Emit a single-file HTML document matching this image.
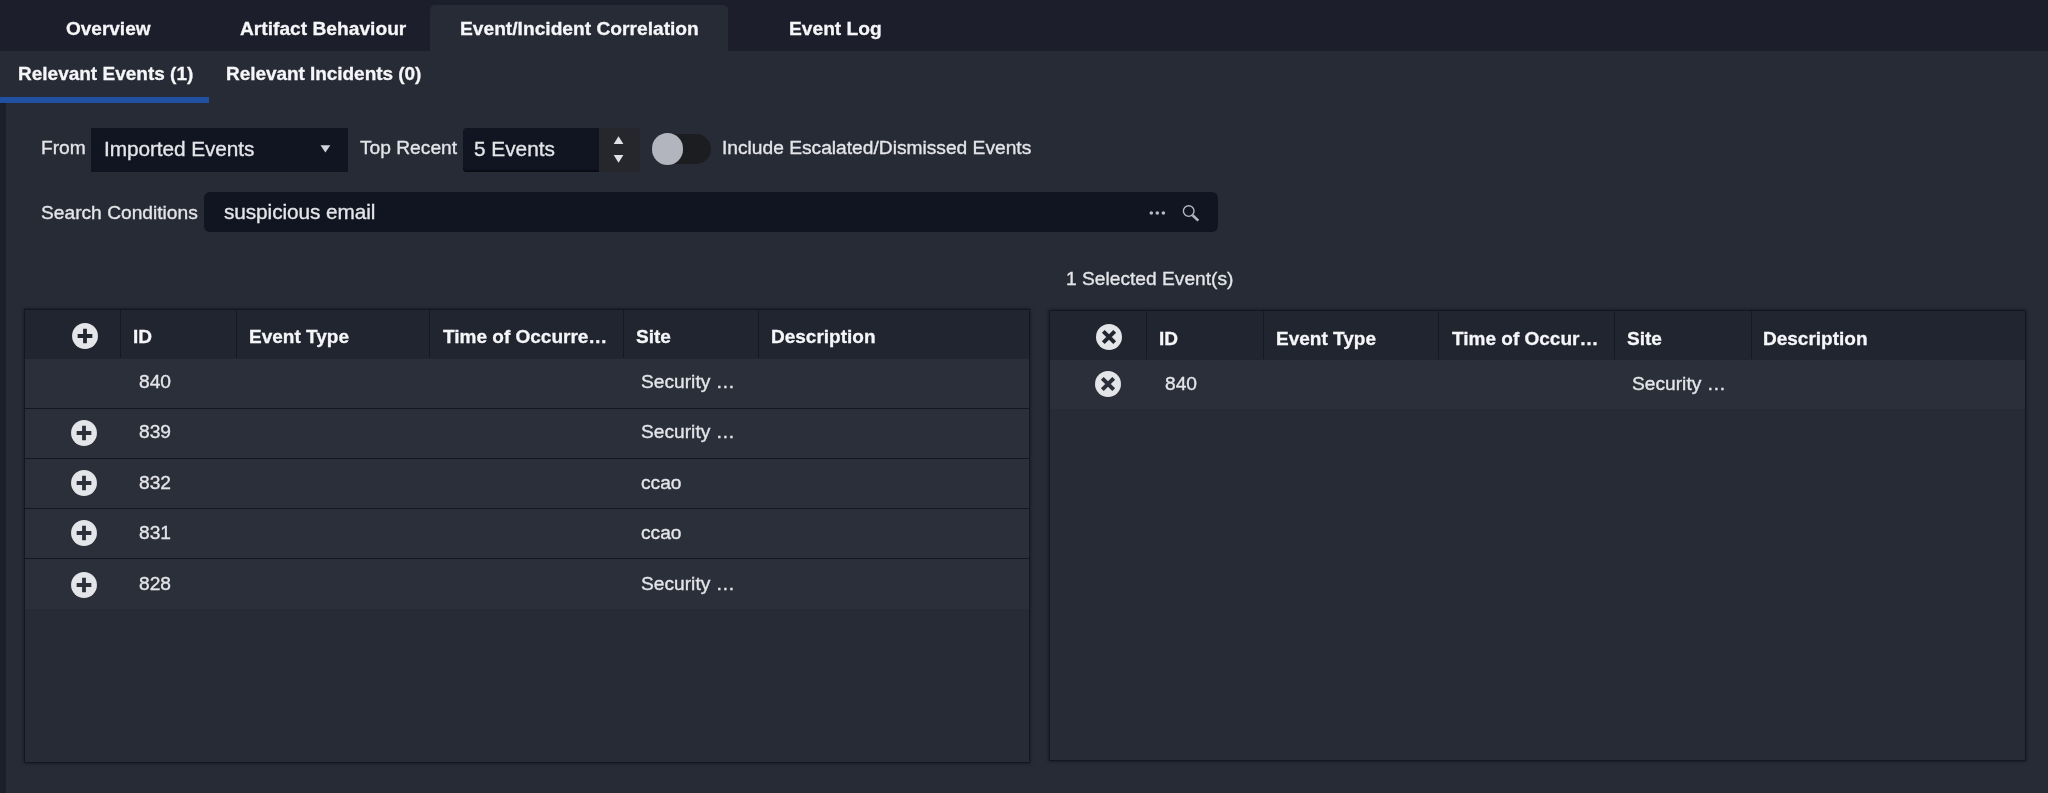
<!DOCTYPE html>
<html lang="en"><head><meta charset="utf-8"><title>Event/Incident Correlation</title>
<style>
html,body{margin:0;padding:0;}
body{width:2048px;height:793px;overflow:hidden;background:#272b35;font-family:"Liberation Sans", sans-serif;position:relative;}
body>div,body>svg,body>span{position:absolute;display:block;}
.t{white-space:nowrap;line-height:1;will-change:transform;}
</style></head><body>
<div style="left:0px;top:0px;width:2048px;height:51px;background:#1c1f2b;"></div>
<div style="left:430px;top:5px;width:298px;height:46px;background:#272b35;border-radius:5px 5px 0 0;"></div>
<div style="left:0px;top:103px;width:6px;height:690px;background:#1c1f2b;"></div>
<div style="left:0px;top:97px;width:209px;height:6px;background:#2050a0;"></div>
<span class="t" style="left:66.00px;top:18.67px;font-size:19px;font-weight:bold;-webkit-text-stroke:0.3px;color:#f6f6f8;">Overview</span>
<span class="t" style="left:240.20px;top:18.50px;font-size:19.2px;font-weight:bold;-webkit-text-stroke:0.3px;color:#f6f6f8;">Artifact Behaviour</span>
<span class="t" style="left:459.60px;top:18.50px;font-size:19.2px;font-weight:bold;-webkit-text-stroke:0.3px;color:#f6f6f8;">Event/Incident Correlation</span>
<span class="t" style="left:788.60px;top:18.50px;font-size:19.2px;font-weight:bold;-webkit-text-stroke:0.3px;color:#f6f6f8;">Event Log</span>
<span class="t" style="left:17.50px;top:64.42px;font-size:19px;font-weight:bold;-webkit-text-stroke:0.3px;color:#f6f6f8;">Relevant Events (1)</span>
<span class="t" style="left:225.50px;top:64.42px;font-size:19px;font-weight:bold;-webkit-text-stroke:0.3px;color:#f6f6f8;letter-spacing:-0.05px;">Relevant Incidents (0)</span>
<span class="t" style="left:41.10px;top:137.95px;font-size:19.2px;-webkit-text-stroke:0.35px;color:#e4e5e9;">From</span>
<div style="left:91px;top:127.5px;width:257px;height:44.5px;background:#111521;"></div>
<span class="t" style="left:104.30px;top:139.09px;font-size:20.8px;-webkit-text-stroke:0.35px;color:#e4e5e9;letter-spacing:-0.08px;">Imported Events</span>
<svg style="left:320px;top:144.5px" width="11" height="9" viewBox="0 0 11 9"><path d="M0.5 0.3 L10.3 0.3 L5.4 7.6 Z" fill="#d3d5db"/></svg>
<span class="t" style="left:359.60px;top:137.95px;font-size:19.2px;-webkit-text-stroke:0.35px;color:#e4e5e9;">Top Recent</span>
<div style="left:463px;top:127.5px;width:177px;height:44.5px;background:#25272d;border-radius:4px;"></div>
<div style="left:463px;top:127.5px;width:136px;height:44.5px;background:#111521;border-radius:4px 0 0 4px;box-shadow:inset 0 -2px 0 #0b0d14;"></div>
<span class="t" style="left:473.75px;top:139.09px;font-size:20.8px;-webkit-text-stroke:0.35px;color:#e4e5e9;">5 Events</span>
<svg style="left:613px;top:136px" width="11" height="28" viewBox="0 0 11 28"><path d="M0.7 7.9 L10.4 7.9 L5.55 0.2 Z" fill="#e0e1e6"/><path d="M0.7 19.1 L10.4 19.1 L5.55 26.8 Z" fill="#e0e1e6"/></svg>
<div style="left:652px;top:134px;width:58.5px;height:30px;background:#1c1d21;border-radius:15px;"></div>
<div style="left:651.6px;top:133.2px;width:31.4px;height:31.4px;background:#b3b5be;border-radius:50%;"></div>
<span class="t" style="left:721.50px;top:137.85px;font-size:19.2px;-webkit-text-stroke:0.35px;color:#e4e5e9;">Include Escalated/Dismissed Events</span>
<span class="t" style="left:40.80px;top:202.75px;font-size:19.2px;-webkit-text-stroke:0.35px;color:#e4e5e9;">Search Conditions</span>
<div style="left:203.5px;top:192.2px;width:1014.7px;height:39.7px;background:#111521;border-radius:6px;"></div>
<span class="t" style="left:223.80px;top:202.19px;font-size:20.8px;-webkit-text-stroke:0.35px;color:#e4e5e9;letter-spacing:-0.08px;">suspicious email</span>
<svg style="left:1146px;top:200px" width="60" height="26" viewBox="0 0 60 26">
<circle cx="5.3" cy="13" r="1.8" fill="#b7bac3"/><circle cx="11.3" cy="13" r="1.8" fill="#b7bac3"/><circle cx="17.4" cy="13" r="1.8" fill="#b7bac3"/>
<circle cx="42.7" cy="11.1" r="5.3" fill="none" stroke="#b4b7c0" stroke-width="1.4"/>
<path d="M46.6 15.2 L52.3 20.6" stroke="#b4b7c0" stroke-width="2.6" stroke-linecap="butt"/>
</svg>
<span class="t" style="left:1066.30px;top:269.15px;font-size:19.2px;-webkit-text-stroke:0.35px;color:#e4e5e9;">1 Selected Event(s)</span>
<div style="left:24px;top:309px;width:1006px;height:454px;background:#272b35;box-sizing:border-box;border:1px solid #131623;box-shadow:0 0 3px rgba(10,13,25,.75);"></div>
<div style="left:25px;top:310px;width:1004px;height:48.5px;background:#212530;"></div>
<div style="left:120px;top:310px;width:1px;height:47.5px;background:#151925;"></div>
<div style="left:236px;top:310px;width:1px;height:47.5px;background:#151925;"></div>
<div style="left:429px;top:310px;width:1px;height:47.5px;background:#151925;"></div>
<div style="left:623px;top:310px;width:1px;height:47.5px;background:#151925;"></div>
<div style="left:758px;top:310px;width:1px;height:47.5px;background:#151925;"></div>
<svg style="left:70.5px;top:321.85px" width="28" height="28" viewBox="0 0 28 28"><circle cx="14" cy="14" r="12.95" fill="#e4e5e8"/><path d="M6.65 14 H21.35 M14 6.75 V21.25" stroke="#212530" stroke-width="3.8"/></svg>
<span class="t" style="left:133.20px;top:326.72px;font-size:19px;font-weight:bold;-webkit-text-stroke:0.3px;color:#f6f6f8;">ID</span>
<span class="t" style="left:248.60px;top:326.72px;font-size:19px;font-weight:bold;-webkit-text-stroke:0.3px;color:#f6f6f8;">Event Type</span>
<span class="t" style="left:442.60px;top:326.72px;font-size:19px;font-weight:bold;-webkit-text-stroke:0.3px;color:#f6f6f8;">Time of Occurre…</span>
<span class="t" style="left:636.10px;top:326.72px;font-size:19px;font-weight:bold;-webkit-text-stroke:0.3px;color:#f6f6f8;">Site</span>
<span class="t" style="left:770.90px;top:326.72px;font-size:19px;font-weight:bold;-webkit-text-stroke:0.3px;color:#f6f6f8;">Description</span>
<div style="left:25px;top:358.5px;width:1004px;height:50px;background:#2b2f3a;"></div>
<div style="left:25px;top:407.5px;width:1004px;height:1.2px;background:#131623;"></div>
<span class="t" style="left:138.60px;top:371.65px;font-size:19.2px;-webkit-text-stroke:0.35px;color:#e4e5e9;">840</span>
<span class="t" style="left:640.90px;top:371.65px;font-size:19.2px;-webkit-text-stroke:0.35px;color:#e4e5e9;">Security …</span>
<div style="left:25px;top:408.5px;width:1004px;height:50px;background:#2b2f3a;"></div>
<div style="left:25px;top:457.5px;width:1004px;height:1.2px;background:#131623;"></div>
<span class="t" style="left:138.60px;top:421.65px;font-size:19.2px;-webkit-text-stroke:0.35px;color:#e4e5e9;">839</span>
<span class="t" style="left:640.90px;top:421.65px;font-size:19.2px;-webkit-text-stroke:0.35px;color:#e4e5e9;">Security …</span>
<svg style="left:70.05px;top:419.05px" width="28" height="28" viewBox="0 0 28 28"><circle cx="14" cy="14" r="12.95" fill="#e4e5e8"/><path d="M6.65 14 H21.35 M14 6.75 V21.25" stroke="#2b2f3a" stroke-width="3.8"/></svg>
<div style="left:25px;top:458.5px;width:1004px;height:50px;background:#2b2f3a;"></div>
<div style="left:25px;top:507.5px;width:1004px;height:1.2px;background:#131623;"></div>
<span class="t" style="left:138.60px;top:472.65px;font-size:19.2px;-webkit-text-stroke:0.35px;color:#e4e5e9;">832</span>
<span class="t" style="left:640.90px;top:472.65px;font-size:19.2px;-webkit-text-stroke:0.35px;color:#e4e5e9;">ccao</span>
<svg style="left:70.05px;top:469.05px" width="28" height="28" viewBox="0 0 28 28"><circle cx="14" cy="14" r="12.95" fill="#e4e5e8"/><path d="M6.65 14 H21.35 M14 6.75 V21.25" stroke="#2b2f3a" stroke-width="3.8"/></svg>
<div style="left:25px;top:508.5px;width:1004px;height:50px;background:#2b2f3a;"></div>
<div style="left:25px;top:557.5px;width:1004px;height:1.2px;background:#131623;"></div>
<span class="t" style="left:138.60px;top:522.65px;font-size:19.2px;-webkit-text-stroke:0.35px;color:#e4e5e9;">831</span>
<span class="t" style="left:640.90px;top:522.65px;font-size:19.2px;-webkit-text-stroke:0.35px;color:#e4e5e9;">ccao</span>
<svg style="left:70.05px;top:519.05px" width="28" height="28" viewBox="0 0 28 28"><circle cx="14" cy="14" r="12.95" fill="#e4e5e8"/><path d="M6.65 14 H21.35 M14 6.75 V21.25" stroke="#2b2f3a" stroke-width="3.8"/></svg>
<div style="left:25px;top:558.5px;width:1004px;height:50.8px;background:#2b2f3a;"></div>
<span class="t" style="left:138.60px;top:573.95px;font-size:19.2px;-webkit-text-stroke:0.35px;color:#e4e5e9;">828</span>
<span class="t" style="left:640.90px;top:573.95px;font-size:19.2px;-webkit-text-stroke:0.35px;color:#e4e5e9;">Security …</span>
<svg style="left:70.05px;top:571.15px" width="28" height="28" viewBox="0 0 28 28"><circle cx="14" cy="14" r="12.95" fill="#e4e5e8"/><path d="M6.65 14 H21.35 M14 6.75 V21.25" stroke="#2b2f3a" stroke-width="3.8"/></svg>
<div style="left:1049px;top:310px;width:977px;height:451px;background:#272b35;box-sizing:border-box;border:1px solid #131623;box-shadow:0 0 3px rgba(10,13,25,.75);"></div>
<div style="left:1050px;top:311px;width:975px;height:48.8px;background:#212530;"></div>
<div style="left:1146px;top:311px;width:1px;height:47.8px;background:#151925;"></div>
<div style="left:1263px;top:311px;width:1px;height:47.8px;background:#151925;"></div>
<div style="left:1438px;top:311px;width:1px;height:47.8px;background:#151925;"></div>
<div style="left:1614px;top:311px;width:1px;height:47.8px;background:#151925;"></div>
<div style="left:1751px;top:311px;width:1px;height:47.8px;background:#151925;"></div>
<svg style="left:1095.1px;top:323.1px" width="28" height="28" viewBox="0 0 28 28"><circle cx="14" cy="14" r="13" fill="#e4e5e8"/><path d="M8.3 8.3 L19.7 19.7 M19.7 8.3 L8.3 19.7" stroke="#212530" stroke-width="4"/></svg>
<span class="t" style="left:1158.90px;top:328.82px;font-size:19px;font-weight:bold;-webkit-text-stroke:0.3px;color:#f6f6f8;">ID</span>
<span class="t" style="left:1275.70px;top:328.82px;font-size:19px;font-weight:bold;-webkit-text-stroke:0.3px;color:#f6f6f8;">Event Type</span>
<span class="t" style="left:1451.70px;top:328.82px;font-size:19px;font-weight:bold;-webkit-text-stroke:0.3px;color:#f6f6f8;">Time of Occur…</span>
<span class="t" style="left:1627.40px;top:328.82px;font-size:19px;font-weight:bold;-webkit-text-stroke:0.3px;color:#f6f6f8;">Site</span>
<span class="t" style="left:1763.10px;top:328.82px;font-size:19px;font-weight:bold;-webkit-text-stroke:0.3px;color:#f6f6f8;">Description</span>
<div style="left:1050px;top:359.8px;width:975px;height:49.2px;background:#2b2f3a;"></div>
<svg style="left:1094.2px;top:370.4px" width="28" height="28" viewBox="0 0 28 28"><circle cx="14" cy="14" r="13" fill="#e4e5e8"/><path d="M8.3 8.3 L19.7 19.7 M19.7 8.3 L8.3 19.7" stroke="#2b2f3a" stroke-width="4"/></svg>
<span class="t" style="left:1164.60px;top:373.55px;font-size:19.2px;-webkit-text-stroke:0.35px;color:#e4e5e9;">840</span>
<span class="t" style="left:1632.40px;top:373.55px;font-size:19.2px;-webkit-text-stroke:0.35px;color:#e4e5e9;">Security …</span>
</body></html>
